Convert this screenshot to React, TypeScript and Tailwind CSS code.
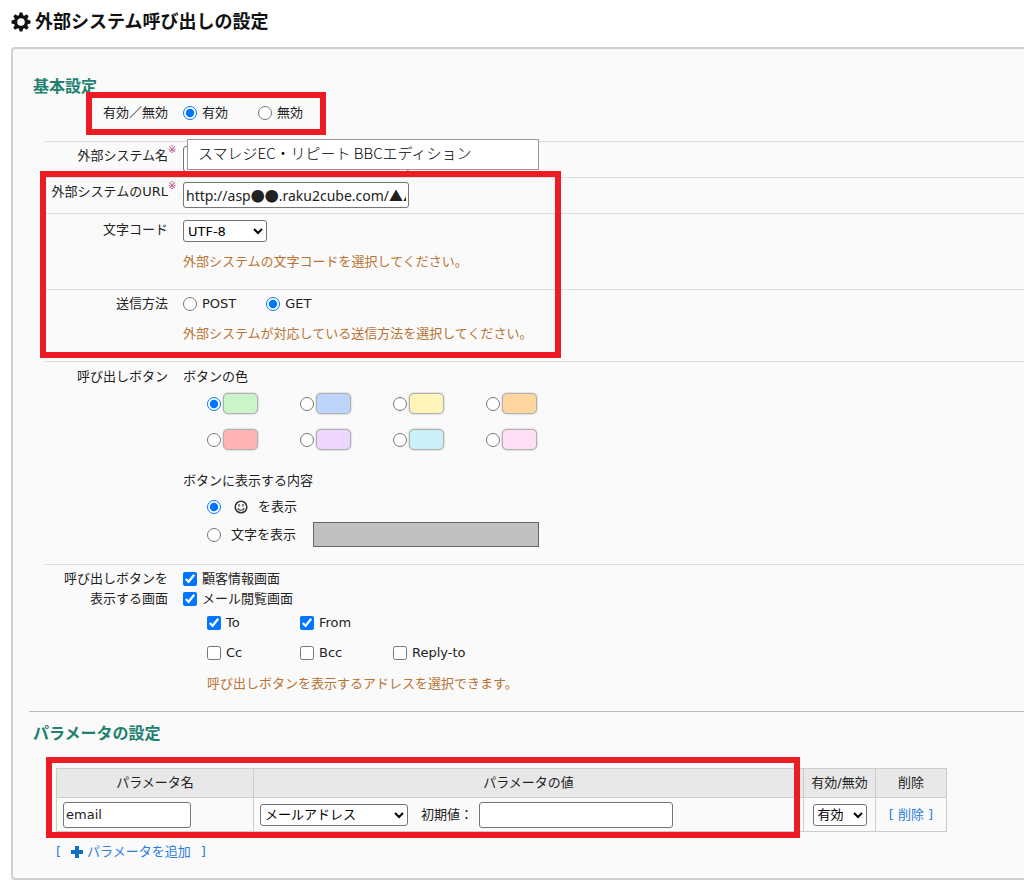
import type { ReactNode } from "react";

const swatches = [
  { name: "green", color: "bg-[#caf5c8]" },
  { name: "blue", color: "bg-[#bdd4fb]" },
  { name: "yellow", color: "bg-[#fff5b8]" },
  { name: "orange", color: "bg-[#ffd5a0]" },
  { name: "red", color: "bg-[#ffb3b3]" },
  { name: "purple", color: "bg-[#edd6ff]" },
  { name: "cyan", color: "bg-[#cbf1f8]" },
  { name: "pink", color: "bg-[#ffdff5]" },
];

const fieldClass =
  "h-[26px] rounded-[3px] border border-[#767676] bg-white px-[2px]";
const selectClass =
  "h-[22px] rounded-[3px] border border-[#767676] bg-white text-black";

const GearIcon = () => (
  <svg className="size-5" viewBox="0 0 20 20" fill="#111" aria-hidden="true">
    {[0, 45, 90, 135].map((deg) => (
      <path
        key={deg}
        d="M8.6 .5h2.8l1 4v11l-1 4H8.6l-1-4v-11z"
        transform={`rotate(${deg} 10 10)`}
      />
    ))}
    <circle cx="10" cy="10" r="7" />
    <circle cx="10" cy="10" r="3.8" fill="#fff" />
  </svg>
);

const SmileIcon = () => (
  <svg
    className="size-[14px]"
    viewBox="0 0 14 14"
    fill="none"
    stroke="#333"
    aria-label="笑顔アイコン"
  >
    <circle cx="7" cy="7" r="5.8" strokeWidth="1.5" />
    <path d="M5 4v2.6M9 4v2.6" strokeWidth="1.2" />
    <path d="M3.8 8.2c1 2.8 5.4 2.8 6.4 0" strokeWidth="1.1" />
  </svg>
);

const PlusIcon = () => (
  <svg className="size-3" viewBox="0 0 12 12" fill="#0f6fc0" aria-hidden="true">
    <path d="M4 0h4v4h4v4H8v4H4V8H0V4h4z" />
  </svg>
);

const Highlight = ({ className }: { className: string }) => (
  <div
    className={`pointer-events-none absolute border-6 border-[#ed1c24] ${className}`}
  />
);

const Hint = ({ children }: { children: ReactNode }) => (
  <p className="text-[#b87333]">{children}</p>
);

type RowProps = {
  label: ReactNode;
  htmlFor?: string;
  required?: boolean;
  className?: string;
  children: ReactNode;
};

const Row = ({ label, htmlFor, required, className, children }: RowProps) => (
  <div className={`flex ${className ?? ""}`}>
    <div className="relative w-[123px] shrink-0 text-right whitespace-nowrap">
      {htmlFor ? <label htmlFor={htmlFor}>{label}</label> : label}
      {required && (
        <span className="absolute -top-1.5 left-full text-[10px] text-[#c04080]">
          ※
        </span>
      )}
    </div>
    <div className="ml-[15px] grow">{children}</div>
  </div>
);

type ChoiceProps = {
  type: "radio" | "checkbox";
  name: string;
  checked?: boolean;
  className?: string;
  children: ReactNode;
};

const Choice = ({ type, name, checked, className, children }: ChoiceProps) => (
  <label className={`flex items-center gap-[5px] ${className ?? ""}`}>
    <input
      type={type}
      name={name}
      defaultChecked={checked}
      className="size-3.5 shrink-0 accent-[#0075ff]"
    />
    {children}
  </label>
);

const BasicSettings = () => (
  <section>
    <h2 className="ml-5 text-base leading-5 font-bold text-[#23806f]">
      基本設定
    </h2>
    <div className="ml-8">
      <div className="relative">
        <Row label="有効／無効" className="pt-1.5 pb-[18px]">
          <div className="flex gap-[30px]">
            <Choice type="radio" name="status" checked>
              有効
            </Choice>
            <Choice type="radio" name="status">
              無効
            </Choice>
          </div>
        </Row>
        <Highlight className="-top-[5px] bottom-1.5 left-[41px] w-[240px]" />
      </div>

      <Row
        label="外部システム名"
        htmlFor="system-name"
        required
        className="border-t border-[#ddd] pt-1 pb-[5px]"
      >
        <div className="relative flex">
          <input
            type="text"
            aria-hidden="true"
            tabIndex={-1}
            className={`${fieldClass} w-[226px]`}
          />
          <input
            id="system-name"
            type="text"
            defaultValue="スマレジEC・リピート BBCエディション"
            className="absolute -top-[7px] left-1 h-[31px] w-[352px] border border-[#999] bg-white px-2.5 pb-1 font-['Noto_Sans_CJK_JP',sans-serif] text-[15px] font-light text-black"
          />
        </div>
      </Row>

      <div className="relative">
        <Row
          label="外部システムのURL"
          htmlFor="system-url"
          required
          className="border-t border-[#ddd] pt-1 pb-[5px]"
        >
          <input
            id="system-url"
            type="text"
            defaultValue="http://asp●●.raku2cube.com/▲▲"
            className={`${fieldClass} block w-[226px] font-['Noto_Sans','Noto_Sans_CJK_JP',sans-serif] text-sm`}
          />
        </Row>
        <Row
          label="文字コード"
          htmlFor="charset"
          className="border-t border-[#ddd] pt-1.5 pb-[17px]"
        >
          <select id="charset" className={`${selectClass} mb-2.5 block w-[84px]`}>
            <option>UTF-8</option>
          </select>
          <Hint>外部システムの文字コードを選択してください。</Hint>
        </Row>
        <Row label="送信方法" className="border-t border-[#ddd] pt-1 pb-[17px]">
          <div className="mb-2.5 flex gap-[30px]">
            <Choice type="radio" name="method">
              POST
            </Choice>
            <Choice type="radio" name="method" checked>
              GET
            </Choice>
          </div>
          <Hint>外部システムが対応している送信方法を選択してください。</Hint>
        </Row>
        <Highlight className="-top-1.5 bottom-[3px] -left-[5px] w-[521px]" />
      </div>

      <Row
        label="呼び出しボタン"
        className="border-t border-[#ddd] pt-[5px] pb-[17px]"
      >
        <p>ボタンの色</p>
        <div className="mt-1.5 ml-6 grid w-[372px] grid-cols-4 gap-y-[15px]">
          {swatches.map((s, i) => (
            <label key={s.name} className="flex items-center gap-[2px]">
              <input
                type="radio"
                name="color"
                aria-label={s.name}
                defaultChecked={i === 0}
                className="size-3.5 accent-[#0075ff]"
              />
              <span
                className={`h-[21px] w-[35px] rounded-[5px] border border-[#b0b0b0] shadow-[0_0_2px_#aaa] ${s.color}`}
              />
            </label>
          ))}
        </div>
        <p className="mt-[21px]">ボタンに表示する内容</p>
        <div className="mt-1.5 ml-6">
          <Choice type="radio" name="content" checked>
            <span className="ml-2 flex items-center gap-2.5">
              <SmileIcon />
              を表示
            </span>
          </Choice>
          <div className="mt-[5px] flex items-center">
            <Choice type="radio" name="content">
              <span className="ml-[5px]">文字を表示</span>
            </Choice>
            <input
              type="text"
              aria-label="表示する文字"
              disabled
              className="ml-[17px] h-[25px] w-[226px] border border-[#666] bg-[#c0c0c0]"
            />
          </div>
        </div>
      </Row>

      <Row
        label={
          <>
            呼び出しボタンを
            <br />
            表示する画面
          </>
        }
        className="border-t border-[#ddd] pt-1 pb-[17px]"
      >
        <Choice type="checkbox" name="customer" checked>
          顧客情報画面
        </Choice>
        <Choice type="checkbox" name="mail" checked>
          メール閲覧画面
        </Choice>
        <div className="mt-1 ml-6 grid w-[279px] grid-cols-3 gap-y-2.5">
          <Choice type="checkbox" name="to" checked>
            To
          </Choice>
          <Choice type="checkbox" name="from" checked className="col-span-2">
            From
          </Choice>
          <Choice type="checkbox" name="cc">
            Cc
          </Choice>
          <Choice type="checkbox" name="bcc">
            Bcc
          </Choice>
          <Choice type="checkbox" name="reply-to">
            Reply-to
          </Choice>
        </div>
        <div className="mt-[11px] ml-6">
          <Hint>呼び出しボタンを表示するアドレスを選択できます。</Hint>
        </div>
      </Row>
    </div>
  </section>
);

const ParameterSettings = () => (
  <section className="ml-4 border-t border-[#bbb] pt-3">
    <h2 className="ml-1 text-base leading-5 font-bold text-[#23806f]">
      パラメータの設定
    </h2>
    <div className="relative mt-6 ml-[27px]">
      <table className="w-[891px] table-fixed border-collapse">
        <thead>
          <tr className="h-[29px] bg-[#e8e8e8]">
            <th className="w-[197px] border border-[#ccc] font-normal">
              パラメータ名
            </th>
            <th className="border border-[#ccc] font-normal">パラメータの値</th>
            <th className="w-[72px] border border-[#ccc] font-normal whitespace-nowrap">
              有効/無効
            </th>
            <th className="w-[71px] border border-[#ccc] font-normal">削除</th>
          </tr>
        </thead>
        <tbody>
          <tr className="h-[34px]">
            <td className="border border-[#ccc] px-1.5">
              <input
                type="text"
                aria-label="パラメータ名"
                defaultValue="email"
                className={`${fieldClass} block w-[128px]`}
              />
            </td>
            <td className="border border-[#ccc] px-1.5">
              <div className="flex items-center">
                <select
                  aria-label="パラメータの値"
                  className={`${selectClass} w-[148px]`}
                >
                  <option>メールアドレス</option>
                </select>
                <label htmlFor="default-value" className="ml-[13px]">
                  初期値：
                </label>
                <input
                  id="default-value"
                  type="text"
                  className={`${fieldClass} ml-1.5 w-[194px]`}
                />
              </div>
            </td>
            <td className="border border-[#ccc]">
              <select
                aria-label="有効/無効"
                className={`${selectClass} mx-auto block w-[54px]`}
              >
                <option>有効</option>
                <option>無効</option>
              </select>
            </td>
            <td className="border border-[#ccc] text-center">
              <a href="#delete" className="text-[#2a7de1]">
                [ 削除 ]
              </a>
            </td>
          </tr>
        </tbody>
      </table>
      <Highlight className="-top-[11px] -left-2.5 h-[81px] w-[754px]" />
    </div>
    <a
      href="#add"
      className="mt-2.5 ml-[27px] flex w-fit items-center text-[#2a7de1]"
    >
      <span className="mr-2.5">[</span>
      <PlusIcon />
      <span className="mr-2.5 ml-1">パラメータを追加</span>
      <span>]</span>
    </a>
  </section>
);

export default function App() {
  return (
    <main className="min-h-screen overflow-x-hidden bg-white pt-2.5 pb-1.5 pl-[11px] font-['DejaVu_Sans','Noto_Sans_CJK_JP',sans-serif] text-[13px] leading-5 text-[#222]">
      <h1 className="flex items-center gap-1 text-lg leading-6 font-bold text-[#111]">
        <GearIcon />
        外部システム呼び出しの設定
      </h1>
      <div className="mt-[13px] rounded-l-[4px] border-2 border-r-0 border-[#d0d0d0] bg-[#fafafa] pt-7 pb-4">
        <BasicSettings />
        <ParameterSettings />
      </div>
    </main>
  );
}
